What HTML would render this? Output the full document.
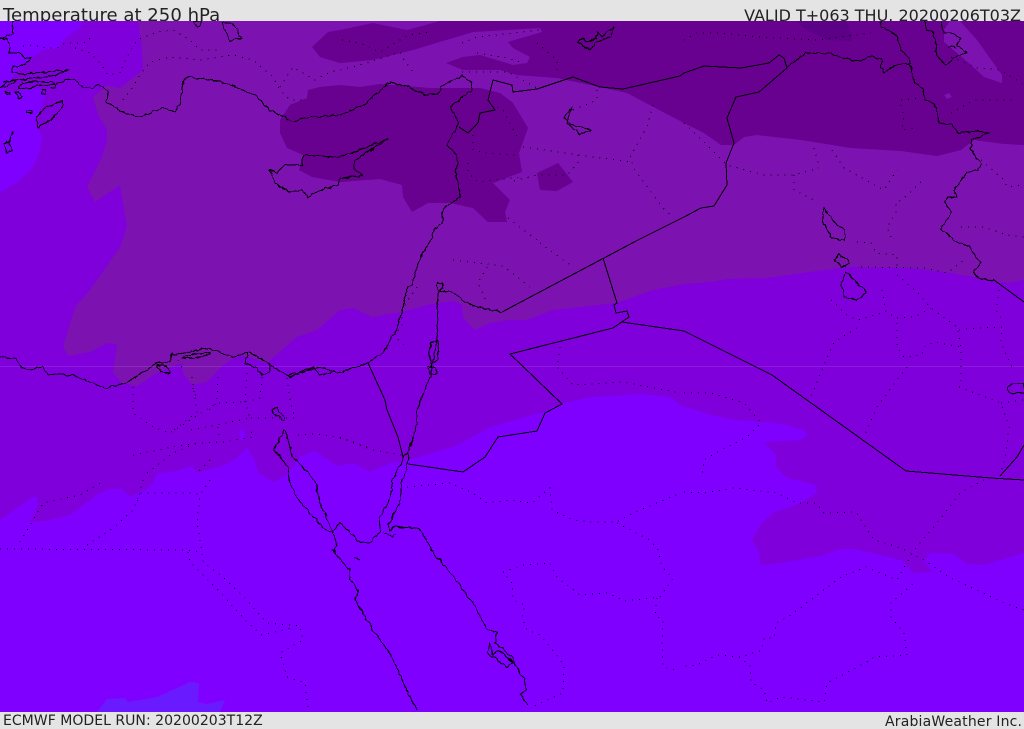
<!DOCTYPE html>
<html><head><meta charset="utf-8"><title>Temperature at 250 hPa</title>
<style>
html,body{margin:0;padding:0;background:#e4e4e4;width:1024px;height:729px;overflow:hidden}
svg{display:block}
text{font-family:"DejaVu Sans","Liberation Sans",sans-serif;fill:#222}
.c{fill:none;stroke:#000;stroke-width:1;shape-rendering:crispEdges;stroke-linejoin:round}
.d{fill:none;stroke:#000;stroke-width:1;stroke-dasharray:1 6;shape-rendering:crispEdges}
</style></head><body>
<svg width="1024" height="729" viewBox="0 0 1024 729" xmlns="http://www.w3.org/2000/svg">
<defs>
<filter id="w" filterUnits="userSpaceOnUse" x="0" y="21" width="1024" height="691" color-interpolation-filters="sRGB">
<feTurbulence type="fractalNoise" baseFrequency="0.18" numOctaves="2" seed="4" result="n"/>
<feDisplacementMap in="SourceGraphic" in2="n" scale="4" xChannelSelector="R" yChannelSelector="G"/>
</filter>
</defs>
<rect width="1024" height="729" fill="#e4e4e4"/>
<text x="3" y="21" font-size="18.1">Temperature at 250 hPa</text>
<text x="1021" y="21" font-size="16" text-anchor="end">VALID T+063 THU. 20200206T03Z</text>
<text x="3" y="725" font-size="14.05">ECMWF MODEL RUN: 20200203T12Z</text>
<text x="885" y="726" font-size="14" textLength="137">ArabiaWeather Inc.</text>
<svg x="0" y="21" width="1024" height="691" viewBox="0 21 1024 691">
<rect x="0" y="21" width="1024" height="691" fill="#7f00ff"/>
<polygon fill="#6a1aff" points="97,712 107,699 125,698 128,702 157,697 190,682 199,683 198,702 207,704 225,700 220,712"/>
<polygon fill="#7f00db" points="83,21 80,28 63,40 59,48 42,50 32,58 18,70 7,85 5,93 20,90 38,88 46,95 35,123 42,137 40,150 33,167 17,183 0,192 0,520 33,497 37,497 38,505 30,522 45,521 70,515 97,495 110,489 122,489 130,497 140,492 150,487 158,473 173,472 192,466 197,473 225,465 237,458 247,448 255,460 258,472 273,482 287,475 300,457 315,451 337,466 353,463 370,472 390,463 410,460 435,452 453,447 473,437 490,427 543,412 563,403 593,397 640,394 670,397 680,405 711,415 734,420 777,423 804,430 807,435 800,440 764,442 776,455 776,467 787,478 796,480 816,485 817,492 801,503 774,512 762,523 752,540 759,552 760,565 781,563 824,555 841,549 854,549 901,560 914,573 932,572 924,560 931,553 954,554 967,564 984,565 1024,553 1024,21"/>
<polygon fill="#7f00ff" points="239,429 244,431 245,440 240,440"/>
<polygon fill="#7c12b0" points="138,21 142,47 143,70 120,88 107,85 93,97 98,115 107,130 107,140 102,157 87,187 95,202 120,185 127,227 120,247 90,290 75,307 63,347 68,356 90,352 107,343 117,344 113,373 122,383 137,386 157,373 182,363 183,373 192,385 207,382 223,365 240,355 267,363 297,337 317,330 340,310 353,308 372,317 402,312 427,305 453,301 462,305 463,318 475,330 490,323 510,320 527,320 553,310 617,303 653,290 684,284 711,282 727,279 767,278 817,271 851,267 911,268 951,273 1007,283 1024,280 1024,21"/>
<polygon fill="#7f00db" points="46,65 50,62 51,65 47,67"/>
<polygon fill="#680090" points="340,85 320,87 308,90 307,98 290,105 280,120 280,133 287,148 303,155 299,170 312,177 340,182 380,179 402,185 403,197 412,212 428,203 450,203 473,208 488,222 507,222 505,212 510,200 493,183 522,172 519,153 528,128 513,103 500,93 480,88 430,88 380,84 360,87"/>
<polygon fill="#680090" points="537,173 558,163 573,182 557,191 540,190"/>
<polygon fill="#680090" points="312,47 328,32 340,30 373,23 407,30 440,21 1024,21 1024,145 1004,144 974,140 961,150 937,156 901,151 851,148 801,140 757,135 744,137 734,145 721,145 704,133 684,123 627,93 600,87 557,78 517,75 500,70 463,70 446,63 463,57 480,55 513,65 527,63 530,57 513,48 508,42 542,32 540,28 473,32 413,50 373,60 340,63 320,57"/>
<polygon fill="#7c12b0" points="950,21 960,21 977,40 1002,75 1002,83 984,77 971,65 944,42 944,30"/>
<polygon fill="#7c12b0" points="944,95 949,93 952,97 947,99"/>
<polygon fill="#5c0088" points="796,21 807,30 827,40 851,41 852,35 846,21"/>
<rect x="0" y="366" width="1024" height="1" fill="#fff" opacity=".1"/>

<g class="d">
<polyline points="23,46 33,45 47,48 57,48 65,43 77,43 88,42 92,33"/>
<polyline points="75,48 90,53 100,63 108,75 123,72"/>
<polyline points="122,68 127,57 137,40 157,32 173,30 190,40 200,50 222,50"/>
<polyline points="123,100 132,88 140,75 150,62 170,57 200,60 233,55 253,60 273,77 280,90 290,100 305,100"/>
<polyline points="280,87 293,67 315,80 330,72 340,70 360,65 400,52 402,57 413,72"/>
<polyline points="342,40 360,43 380,52 400,40 408,35 430,32"/>
<polyline points="462,43 477,37 540,30"/>
<polyline points="462,72 508,72 537,88"/>
<polyline points="477,53 507,58 520,62"/>
<polyline points="537,43 557,60 557,72"/>
<polyline points="597,90 597,100 573,110"/>
<polyline points="653,105 647,127 630,157 635,170 663,208 673,217"/>
<polyline points="523,147 580,155 630,162"/>
<polyline points="578,155 578,163 567,175 537,175 510,182"/>
<polyline points="473,135 473,150 487,153 517,155"/>
<polyline points="497,107 503,110 517,137"/>
<polyline points="468,163 468,173 478,182 520,177"/>
<polyline points="508,218 537,240"/>
<polyline points="684,40 697,33 721,33 757,37 817,40 871,33"/>
<polyline points="684,123 704,142 727,165 764,175 794,175 819,168"/>
<polyline points="794,175 794,190 814,200"/>
<polyline points="814,148 819,165"/>
<polyline points="832,150 844,168 884,190 897,170"/>
<polyline points="921,182 902,200 896,202 896,213 887,227 892,240"/>
<polyline points="901,100 921,98"/>
<polyline points="901,105 904,117 902,130 917,128"/>
<polyline points="951,113 974,100 1017,100"/>
<polyline points="981,160 1004,180 1007,187 1024,185"/>
<polyline points="961,227 984,227 1007,235 1024,237"/>
<polyline points="951,57 977,68 1001,70 1024,85"/>
<polyline points="857,242 871,243 876,253 897,255 897,267"/>
<polyline points="861,267 924,268 947,273 964,260"/>
<polyline points="897,275 917,292 931,308 957,327 961,347 961,373 961,387"/>
<polyline points="882,290 886,312 897,318 914,317 931,308"/>
<polyline points="831,300 847,315 857,320 886,312"/>
<polyline points="897,323 897,347 904,357 922,355 924,347 934,342 961,347"/>
<polyline points="959,330 977,328 1002,327 1001,343 1012,367"/>
<polyline points="999,290 996,310 1002,320"/>
<polyline points="857,328 834,342 824,365 811,397"/>
<polyline points="907,367 897,380 877,407 864,437"/>
<polyline points="959,387 1001,403 1009,427 1006,453 1001,473"/>
<polyline points="1001,403 1024,400"/>
<polyline points="684,393 711,393 744,403 761,423 747,437 721,450 704,460 702,477"/>
<polyline points="560,347 557,367 573,385 623,382 680,393"/>
<polyline points="540,243 573,267"/>
<polyline points="453,260 503,266 530,287"/>
<polyline points="487,267 478,283 487,303"/>
<polyline points="417,287 408,300 402,310 402,327 393,335 407,348"/>
<polyline points="340,438 373,450 402,455"/>
<polyline points="133,387 133,413 153,427 170,433 190,420 217,403 245,402"/>
<polyline points="192,377 197,412 170,433"/>
<polyline points="218,377 217,403 205,413"/>
<polyline points="247,373 245,402 250,418 217,425 190,430"/>
<polyline points="262,377 260,398 245,402"/>
<polyline points="287,378 290,400 295,418 250,418"/>
<polyline points="133,455 173,447 197,443 223,442 253,437 250,427"/>
<polyline points="218,427 220,440"/>
<polyline points="298,435 317,434 343,438 370,448"/>
<polyline points="147,473 173,453 197,443"/>
<polyline points="210,460 197,473"/>
<polyline points="193,388 197,400"/>
<polyline points="178,360 183,370"/>
<polyline points="0,549 187,550 202,552"/>
<polyline points="20,542 32,522 43,503 80,495 102,482"/>
<polyline points="87,545 113,528 133,510 140,493 193,493 200,495 197,523 202,552 203,562 223,577 245,598 267,623 300,626 303,640 280,653 287,677 305,683 308,707"/>
<polyline points="188,552 190,562 220,592 248,623 262,635 283,630 295,627"/>
<polyline points="210,480 200,495"/>
<polyline points="143,480 137,503"/>
<polyline points="407,487 450,483 473,493 487,503 510,500 532,503 550,488 552,510 573,520 593,522 617,522 633,513 678,494"/>
<polyline points="617,523 650,540 658,550 662,567 673,578 660,597 625,601 607,593 580,595 557,577 550,563 523,565 503,572 512,583 513,600 525,605 522,617 527,630 540,635 555,653 564,665 563,693 532,707"/>
<polyline points="657,598 655,615 663,620 662,643 663,667 677,670"/>
<polyline points="684,492 704,493 734,488 777,493 797,503 816,503 824,513 856,512 874,540 901,548 924,560 951,578 1004,603 1024,610"/>
<polyline points="984,480 961,492 937,523 914,550 897,580 866,567 841,577 817,595 791,615 776,623 774,638 764,638 762,650 741,657 717,655 697,665 684,666"/>
<polyline points="739,657 750,665 751,682 764,690 767,703 781,697 824,702 827,683 867,662 874,657 907,655 904,633 891,617 891,603 914,583"/>
</g>

<g class="c" filter="url(#w)">
<polyline points="13,21 13,33 3,38 8,40 10,53 20,53 25,58 30,58 25,65 13,67 12,72 22,74 68,70 55,76 35,78 21,80 3,82"/>
<polyline points="0,38 3,38"/>
<polygon points="18,88 23,83 33,82 53,82 55,85 37,85 32,88 18,89"/>
<polygon points="0,88 8,81 18,80 10,85"/>
<polyline points="50,88 55,88 57,83 63,82 65,80 75,80 83,87 93,88 98,85 108,91 107,102 117,108 122,112 132,115 140,117 163,107 175,112 180,103 183,82 188,77 222,82 255,95 270,110 295,122 300,118 340,115 357,108 362,107 390,82 403,85 427,95 440,93 440,87 462,76 472,83 472,90 450,107 459,123 447,145 457,155 458,163 455,173 460,193 460,198 443,208 442,223 433,230 432,240 423,252 415,272 413,285 407,287 402,312 395,333 383,352 368,363 340,373 317,367 290,377 270,365 250,352 232,357 208,348 173,355 172,353 170,363 157,363 128,382 105,388 93,383 72,375 47,374 43,367 33,369 22,368 17,359 0,357"/>
<polygon points="182,358 195,354 210,352 210,354 200,357 185,359"/>
<polygon points="157,365 161,372 170,373 166,366"/>
<polyline points="248,353 245,363 257,368 262,375 270,373 270,365"/>
<polyline points="287,376 300,372 313,367 320,375 332,372"/>
<polyline points="272,410 277,408 285,418 284,421 278,416 272,413 272,410"/>
<polyline points="285,430 280,437 274,450 288,467 289,480 293,490 300,502 310,513 323,528 333,533 337,543 333,550 340,560 350,570 350,580 358,590 355,600 373,630 390,653 408,693 417,710"/>
<polyline points="285,430 293,457 313,478 315,480 320,503 333,532 340,523 360,542 370,543 380,532 380,517 390,498 393,480 405,455 408,453 407,470 402,480 400,503 388,525 390,530 393,527 418,528 422,532 435,555 452,575 473,603 487,630 497,633 495,643 510,655 517,668 525,680 526,690 520,695 528,705"/>
<polygon points="490,643 487,653 507,667 513,663 505,655 497,650 493,655"/>
<polyline points="384,533 392,537 396,535"/>
<polyline points="354,557 360,560"/>
<polyline points="408,453 417,423 417,410 430,377 437,340 438,293 448,290 460,297 465,302 480,308 502,312"/>
<polygon points="431,343 438,340 439,347 437,360 432,363 429,355"/>
<polygon points="428,367 435,368 437,373 430,374"/>
<polygon points="437,283 442,283 443,288 439,292 436,287"/>
<polyline points="881,21 882,27 897,35 901,50 909,58 911,68 914,82 922,88 924,100 934,103 939,123 951,125 959,133 977,131 989,133 972,140 971,150 981,163 979,170 967,172 954,190 957,197 947,197 944,202 951,210 949,218 941,228 954,240 969,247 981,263 974,272 979,279 994,280"/>
<polyline points="787,67 806,53 827,53 851,60 861,61 871,56 882,60 881,68 884,73 897,64 911,63"/>
<polyline points="924,21 926,30 934,33 937,57 947,65 954,58 967,52 957,45 961,38 951,33 944,33 942,21"/>
<polyline points="577,42 583,38 585,42 597,38 597,32 602,37 607,32 614,27 610,37 597,42 590,50 577,42"/>
<polygon points="572,107 564,117 570,124 592,130 580,134 567,123 569,116"/>
<polyline points="303,155 302,165 285,165 277,173 270,170 275,183 290,193 302,190 308,197 320,190 338,185 340,178 352,177 363,176 353,168 355,160 388,139 340,157 303,155"/>
<polygon points="63,100 45,108 36,118 38,128 53,118 62,107"/>
<polygon points="12,133 10,140 4,144 7,152 13,150 9,143"/>
<polygon points="193,21 198,28 202,21"/>
<polygon points="222,23 230,41 241,38 233,24"/>
<polygon points="42,90 46,90 45,95 42,93"/>
<polygon points="15,92 19,98 22,97 18,92"/>
<polygon points="6,92 10,92 10,94 6,94"/>
<polygon points="26,111 32,111 32,113 26,113"/>
<polygon points="839,254 834,260 842,267 850,263 847,260"/>
<polygon points="846,272 841,283 844,297 857,300 866,292 854,280"/>
<polygon points="824,208 822,220 832,238 845,240 845,230 834,222"/>
<polygon points="1024,384 1012,384 1008,388 1010,393 1024,393"/>
<polyline points="948,47 953,45 956,48"/>
</g>
<g class="c">
<polyline points="368,363 385,400 387,410 398,437 403,457"/>
<polyline points="502,312 638,240 684,217 701,208 714,206 727,185 726,163 734,143 727,118 736,97 759,92 787,68 784,58 779,55 769,63 741,68 704,66 684,73 680,76 623,89 600,87 573,77 537,89 513,92 512,85 493,80 488,100 495,110 480,113 478,123 468,133 459,127"/>
<polyline points="603,258 617,303 614,305 616,313 627,311 629,317 613,328 510,354 562,404 545,413 537,431 498,437 485,457 463,472 408,464"/>
<polyline points="622,322 684,331 772,375 906,471 991,478 1024,480"/>
<polyline points="1000,476 1017,457 1024,445"/>
<polyline points="994,280 1024,302"/>
</g>
</svg>
</svg>
</body></html>
